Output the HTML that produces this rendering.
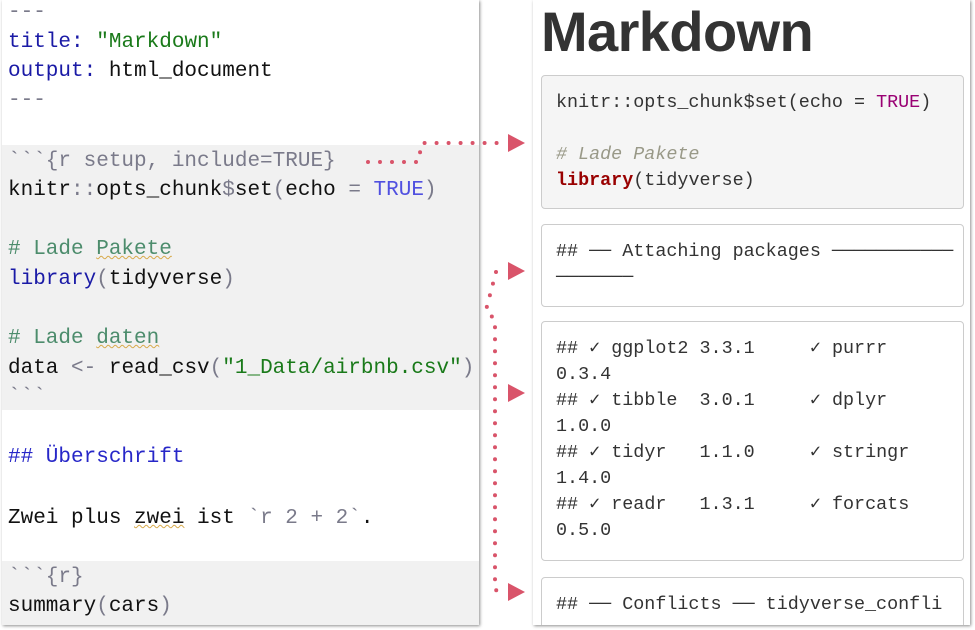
<!DOCTYPE html>
<html><head><meta charset="utf-8"><style>
body{margin:0;width:975px;height:630px;background:#fff;position:relative;overflow:hidden;font-family:"Liberation Mono",monospace}
#left{position:absolute;left:2px;top:0;width:477px;height:625px;background:#fff;box-shadow:1px 1px 3px rgba(0,0,0,.45)}
.g{position:absolute;left:0;width:477px;background:#f1f1f1}
.l{position:absolute;left:6px;font-size:21px;white-space:pre;line-height:30px;color:#111}
.kw{color:#1a1aa6}.st{color:#1a7a1a}.cm{color:#4c8c6c}.gr{color:#7a7a8a}.hd{color:#2727c8}.tr{color:#5050e0}
.sq{text-decoration:underline wavy #d7a94a;text-decoration-thickness:1px}
#right{position:absolute;left:533px;top:0;width:437px;height:625px;background:#fff;box-shadow:1px 1px 3px rgba(0,0,0,.45);overflow:hidden}
h1{position:absolute;left:8px;top:-1px;margin:0;font-family:"Liberation Sans",sans-serif;font-weight:bold;font-size:56px;color:#333;letter-spacing:-0.6px}
.box{position:absolute;left:8px;width:421px;border:1px solid #ccc;border-radius:4px;background:#fff;overflow:hidden}
.box.gr2{background:#f5f5f5}
.r{position:absolute;left:14px;font-size:18.4px;white-space:pre;line-height:26px;color:#333}
</style></head><body>
<div id="left">
<div class="g" style="top:145px;height:265px"></div>
<div class="g" style="top:561px;height:64px"></div>
<div class="l gr" style="top:-2px">---</div>
<div class="l" style="top:28px"><span class="kw">title:</span> <span class="st">"Markdown"</span></div>
<div class="l" style="top:57px"><span class="kw">output:</span> html_document</div>
<div class="l gr" style="top:86px">---</div>
<div class="l gr" style="top:147px">&#96;&#96;&#96;{r setup, include=TRUE}</div>
<div class="l" style="top:176px">knitr<span class="gr">::</span>opts_chunk<span class="gr">$</span>set<span class="gr">(</span>echo <span class="gr">=</span> <span class="tr">TRUE</span><span class="gr">)</span></div>
<div class="l cm" style="top:235px"># Lade <span class="sq">Pakete</span></div>
<div class="l" style="top:265px"><span class="kw">library</span><span class="gr">(</span>tidyverse<span class="gr">)</span></div>
<div class="l cm" style="top:324px"># Lade <span class="sq">daten</span></div>
<div class="l" style="top:354px">data <span class="gr">&lt;-</span> read_csv<span class="gr">(</span><span class="st">"1_Data/airbnb.csv"</span><span class="gr">)</span></div>
<div class="l gr" style="top:383px">&#96;&#96;&#96;</div>
<div class="l hd" style="top:443px">## Überschrift</div>
<div class="l" style="top:504px">Zwei plus <span class="sq">zwei</span> ist <span class="gr">&#96;r 2 + 2&#96;</span>.</div>
<div class="l gr" style="top:563px">&#96;&#96;&#96;{r}</div>
<div class="l" style="top:592px">summary<span class="gr">(</span>cars<span class="gr">)</span></div>
</div>
<div id="right">
<h1>Markdown</h1>
<div class="box gr2" style="top:75px;height:132px">
<div class="r" style="top:14px">knitr::opts_chunk$set(echo = <span style="color:#990073">TRUE</span>)</div>
<div class="r" style="top:66px;color:#998;font-style:italic"># Lade Pakete</div>
<div class="r" style="top:92px"><b style="color:#990000">library</b>(tidyverse)</div>
</div>
<div class="box" style="top:224px;height:81px">
<div class="r" style="top:14px">## ── Attaching packages ───────────</div>
<div class="r" style="top:40px">───────</div>
</div>
<div class="box" style="top:321px;height:238px">
<div class="r" style="top:14px">## ✓ ggplot2 3.3.1     ✓ purrr</div>
<div class="r" style="top:40px">0.3.4</div>
<div class="r" style="top:66px">## ✓ tibble  3.0.1     ✓ dplyr</div>
<div class="r" style="top:92px">1.0.0</div>
<div class="r" style="top:118px">## ✓ tidyr   1.1.0     ✓ stringr</div>
<div class="r" style="top:144px">1.4.0</div>
<div class="r" style="top:170px">## ✓ readr   1.3.1     ✓ forcats</div>
<div class="r" style="top:196px">0.5.0</div>
</div>
<div class="box" style="top:577px;height:60px">
<div class="r" style="top:14px">## ── Conflicts ── tidyverse_confli</div>
</div>
</div>
<svg style="position:absolute;left:0;top:0" width="975" height="630">
<g fill="none" stroke="#d9546a" stroke-width="4" stroke-linecap="round" stroke-dasharray="0 12">
<path d="M368 162 L418 162 L422 143 L505 143"/>
<path d="M496 272 L486 310 L495 320 L495 590 L505 592"/>
</g>
<g fill="#d9546a">
<path d="M508 134 L525 143 L508 152Z"/>
<path d="M508 262 L525 271 L508 280Z"/>
<path d="M508 384 L525 393 L508 402Z"/>
<path d="M508 583 L525 592 L508 601Z"/>
</g>
</svg>
</body></html>
